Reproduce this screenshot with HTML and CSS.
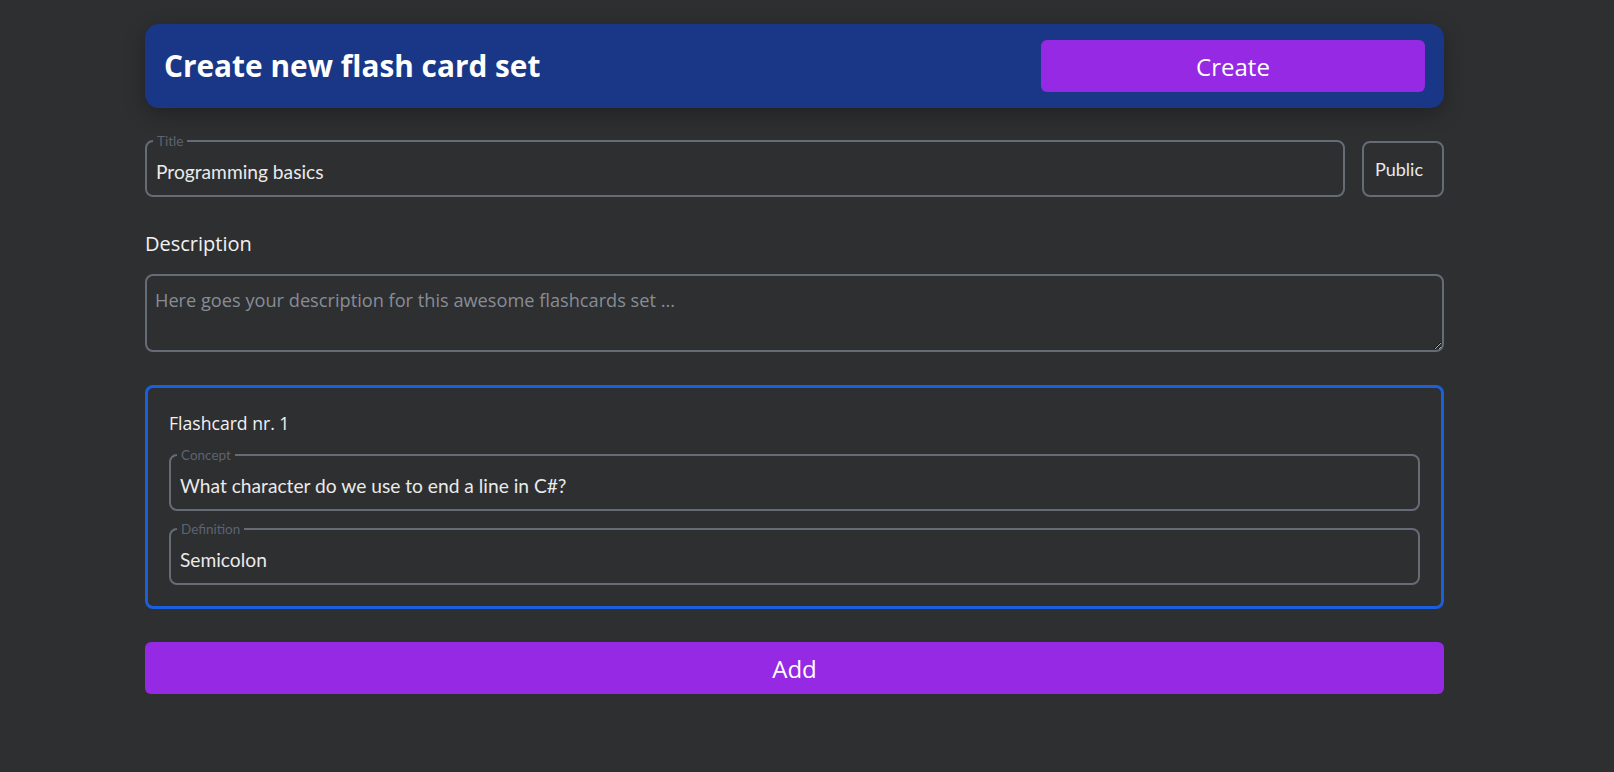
FILE: index.html
```html
<!DOCTYPE html>
<html lang="en">
<head>
<meta charset="utf-8">
<title>Create new flash card set</title>
<link rel="stylesheet" href="styles.css">
</head>
<body>
<div class="page">
  <header class="topbar">
    <h1 class="topbar-title">Create new flash card set</h1>
    <button class="btn btn-create" type="button">Create</button>
  </header>

  <div class="title-row">
    <fieldset class="field field-grow">
      <legend class="field-legend">Title</legend>
      <input class="field-input" type="text" value="Programming basics">
    </fieldset>
    <button class="toggle" type="button">Public</button>
  </div>

  <label class="desc-label" for="desc">Description</label>
  <textarea id="desc" class="desc-input" placeholder="Here goes your description for this awesome flashcards set ..."></textarea>

  <section class="card">
    <h2 class="card-title">Flashcard nr. 1</h2>
    <fieldset class="field">
      <legend class="field-legend">Concept</legend>
      <input class="field-input" type="text" value="What character do we use to end a line in C#?">
    </fieldset>
    <fieldset class="field field-second">
      <legend class="field-legend">Definition</legend>
      <input class="field-input" type="text" value="Semicolon">
    </fieldset>
  </section>

  <button class="btn btn-add" type="button">Add</button>
</div>
</body>
</html>
```

FILE: styles.css
```css
html, body {
  margin: 0;
  padding: 0;
  background: #2e2f31;
}

body {
  font-family: "Open Sans", "Noto Sans", sans-serif;
  color: #f2f2f2;
}

.page {
  width: 1299px;
  margin-left: 145px;
  padding-top: 24px;
  display: flex;
  flex-direction: column;
}

.topbar {
  box-sizing: border-box;
  height: 84px;
  padding: 0 19px 0 19px;
  display: flex;
  align-items: center;
  justify-content: space-between;
  background: #1a3787;
  border-radius: 14px;
  box-shadow: 0 6px 20px rgba(0, 0, 0, 0.28);
}

.topbar-title {
  margin: 0;
  font-family: "Open Sans", sans-serif;
  font-weight: 700;
  font-size: 29.8px;
  line-height: 38px;
  color: #ffffff;
}

.btn {
  border: none;
  background: #9629e3;
  color: #ffffff;
  font-family: "Open Sans", sans-serif;
  font-size: 24px;
  border-radius: 6px;
  cursor: pointer;
  padding: 0;
}

.btn-create {
  width: 384px;
  height: 52px;
}

.btn-add {
  margin-top: 33px;
  width: 100%;
  height: 52px;
}

.title-row {
  margin-top: 25px;
  display: flex;
  align-items: flex-end;
  gap: 17px;
}

.field {
  margin: 0;
  padding: 0;
  min-width: 0;
  border: 2px solid #656b77;
  border-radius: 8px;
  display: flex;
}

.field-grow {
  flex: 1;
}

.field-legend {
  margin-left: 6px;
  padding: 0 4px;
  font-family: "Lato", sans-serif;
  font-size: 13.5px;
  line-height: 16px;
  color: #5d6370;
}

.field-input {
  flex: 1;
  box-sizing: border-box;
  height: 46px;
  padding: 0 9px 2px;
  margin: 0;
  border: none;
  outline: none;
  background: transparent;
  font-family: "Lato", sans-serif;
  font-size: 19.2px;
  color: #eaeaea;
}

.toggle {
  box-sizing: border-box;
  width: 82px;
  height: 56px;
  margin: 0;
  padding: 0 0 0 11px;
  text-align: left;
  border: 2px solid #656b77;
  border-radius: 8px;
  background: transparent;
  font-family: "Lato", sans-serif;
  font-weight: 400;
  font-size: 18px;
  color: #eaeaea;
}

.desc-label {
  display: block;
  margin-top: 33px;
  font-family: "Open Sans", sans-serif;
  font-size: 20px;
  line-height: 27px;
  color: #f2f2f2;
}

.desc-input {
  display: block;
  box-sizing: border-box;
  margin-top: 17px;
  width: 100%;
  height: 78px;
  padding: 12px 8px 8px;
  border: 2px solid #656b77;
  border-radius: 8px;
  background: transparent;
  font-family: "Open Sans", sans-serif;
  font-size: 18.2px;
  color: #eaeaea;
  outline: none;
}

.desc-input::placeholder {
  color: #878d96;
}

.card {
  margin-top: 33px;
  padding: 23px 21px 21px;
  border: 3px solid #1a5fdc;
  border-radius: 8px;
  display: flex;
  flex-direction: column;
}

.card-title {
  margin: 0 0 12px;
  font-family: "Open Sans", sans-serif;
  font-weight: 400;
  font-size: 17.6px;
  line-height: 24px;
  color: #f2f2f2;
}

.field-second {
  margin-top: 10px;
}
```
